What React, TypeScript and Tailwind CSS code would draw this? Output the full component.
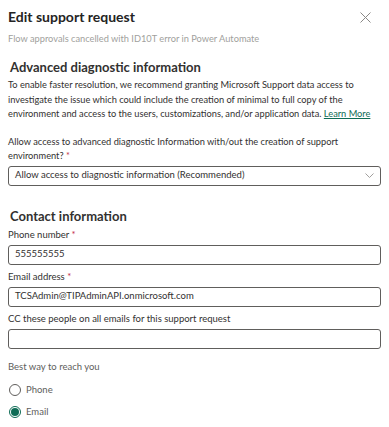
import React from "react";

function Label({ text, required }: { text: string; required?: boolean }) {
  return (
    <div className="text-[9.5px] leading-[14px] text-[#323130]">
      {text}
      {required && <span className="text-[#c4314b]"> *</span>}
    </div>
  );
}

function Input({ value }: { value?: string }) {
  return (
    <div className="h-[20px] mt-[3px] border border-[#605e5c] rounded-[3px] px-[6px] flex items-center text-[9.5px] text-[#323130]">
      {value}
    </div>
  );
}

export default function App() {
  return (
    <div
      className="w-[389px] h-[427px] bg-white overflow-hidden px-[8px] pt-[7px]"
      style={{ fontFamily: 'Lato, "Noto Sans", sans-serif' }}
    >
      <div className="flex items-start justify-between">
        <div className="text-[14px] font-bold leading-[20px] text-[#242424]">Edit support request</div>
        <svg width="11" height="11" viewBox="0 0 11 11" className="mt-[5px] mr-[10px]">
          <path d="M0.5 0.5 L10.5 10.5 M10.5 0.5 L0.5 10.5" stroke="#8a8886" strokeWidth="1" />
        </svg>
      </div>
      <div className="mt-[6px] text-[9.25px] leading-[12px] text-[#a19f9d]">
        Flow approvals cancelled with ID10T error in Power Automate
      </div>

      <div className="mt-[14px] px-[2px] text-[13px] leading-[17px] font-bold text-[#323130]">
        Advanced diagnostic information
      </div>
      <div className="text-[9.25px] leading-[14.5px] text-[#323130] mt-[2px] whitespace-nowrap">
        To enable faster resolution, we recommend granting Microsoft Support data access to
        <br />
        investigate the issue which could include the creation of minimal to full copy of the
        <br />
        environment and access to the users, customizations, and/or application data.{" "}
        <span className="text-[#0f6c56] underline">Learn More</span>
      </div>

      <div className="mt-[13px] text-[9.25px] leading-[14px] text-[#323130] whitespace-nowrap">
        Allow access to advanced diagnostic Information with/out the creation of support
        <br />
        environment?
        <span className="text-[#c4314b]"> *</span>
      </div>
      <div className="mt-[3px] h-[20px] border border-[#605e5c] rounded-[3px] pl-[6px] pr-[6px] flex items-center justify-between text-[9.5px] text-[#323130]">
        <span>Allow access to diagnostic information (Recommended)</span>
        <svg width="9" height="6" viewBox="0 0 9 6">
          <path d="M0.5 0.5 L4.5 4.5 L8.5 0.5" stroke="#a19f9d" fill="none" strokeWidth="1" />
        </svg>
      </div>

      <div className="mt-[22px] px-[2px] text-[13px] leading-[17px] font-bold text-[#323130]">
        Contact information
      </div>
      <div className="mt-[3px]">
        <Label text="Phone number" required />
        <Input value="555555555" />
      </div>
      <div className="mt-[5px]">
        <Label text="Email address" required />
        <Input value="TCSAdmin@TIPAdminAPI.onmicrosoft.com" />
      </div>
      <div className="mt-[5px]">
        <Label text="CC these people on all emails for this support request" />
        <Input />
      </div>

      <div className="mt-[11px] text-[9.5px] leading-[14px] text-[#605e5c]">Best way to reach you</div>
      <div className="mt-[9px] flex items-center gap-[5px] text-[9.5px] text-[#605e5c] pl-[1px]">
        <span className="w-[12px] h-[12px] rounded-full border border-[#605e5c]" />
        Phone
      </div>
      <div className="mt-[8px] flex items-center gap-[5px] text-[9.5px] text-[#605e5c] pl-[1px]">
        <span className="w-[12px] h-[12px] rounded-full border border-[#0f6c56] flex items-center justify-center">
          <span className="w-[8px] h-[8px] rounded-full bg-[#0f6c56]" />
        </span>
        Email
      </div>
    </div>
  );
}
